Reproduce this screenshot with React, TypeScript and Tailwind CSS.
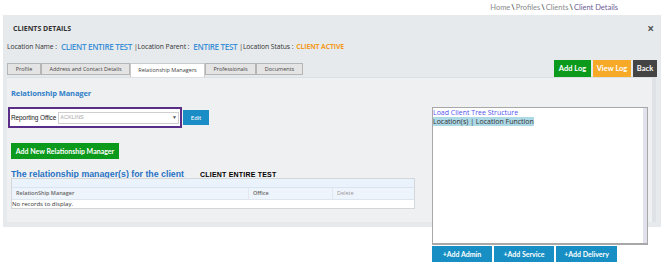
import React from 'react';

const tabs = [
  { label: 'Profile', w: 'w-[34px]' },
  { label: 'Address and Contact Details', w: 'w-[89px]' },
  { label: 'Relationship Managers', w: 'w-[75px]' },
  { label: 'Professionals', w: 'w-[51px]' },
  { label: 'Documents', w: 'w-[47px]' },
];

function Breadcrumb() {
  return (
    <div className="h-[15px] flex items-center justify-end pr-[52px] text-[7.5px] text-[#8a8a8a] font-['Lato',sans-serif]">
      <span>Home</span>
      <span className="text-[#555] font-bold mx-[1px]">\</span>
      <span>Profiles</span>
      <span className="text-[#555] font-bold mx-[1px]">\</span>
      <span>Clients</span>
      <span className="text-[#555] font-bold mx-[1px]">\</span>
      <span className="text-[#6d5a96]">Client Details</span>
    </div>
  );
}

function TabsRow() {
  return (
    <div className="flex items-end justify-between h-[17px] pl-[4px] pr-[4px]">
      <div className="flex items-end mb-[2px]">
        {tabs.map((t) => {
          const active = t.label === 'Relationship Managers';
          return (
            <div
              key={t.label}
              className={
                active
                  ? `${t.w} h-[14px] flex items-center justify-center bg-white border border-[#c9c9c9] border-b-0 text-[5.5px] text-[#444] -mb-[2px] pb-[1px]`
                  : `${t.w} h-[12px] flex items-center justify-center bg-[#e4e4e4] border border-[#b5b5b5] text-[5.5px] text-[#444]`
              }
            >
              {t.label}
            </div>
          );
        })}
      </div>
      <div className="flex gap-[2px] font-['Lato',sans-serif] font-bold text-[7.5px] text-white">
        <div className="h-[17px] w-[37px] flex items-center justify-center bg-[#0c9a1c]">Add Log</div>
        <div className="h-[17px] w-[38px] flex items-center justify-center bg-[#f7a928]">View Log</div>
        <div className="h-[17px] w-[24px] flex items-center justify-center bg-[#444444]">Back</div>
      </div>
    </div>
  );
}

function RightTree() {
  return (
    <div className="w-[216px] shrink-0 self-start ml-[17px] mt-[29px] flex flex-col">
      <div className="h-[138px] shrink-0 bg-white border border-[#a8a8a8] border-b-2 flex">
        <div className="flex-1 flex flex-col items-start text-[7px] font-['Open_Sans',sans-serif] leading-[9px]">
          <span className="text-[#5252f0]">Load Client Tree Structure</span>
          <span className="bg-[#add8e6] text-[#333]">Location(s) | Location Function</span>
        </div>
        <div className="w-[4px] bg-[#e2e2ec]" />
      </div>
      <div className="flex gap-[2px] mt-[1px] font-['Lato',sans-serif] font-bold text-[7px] text-white">
        <div className="h-[16px] w-[60px] flex items-center justify-center bg-[#178fc4]">+Add Admin</div>
        <div className="h-[16px] w-[60px] flex items-center justify-center bg-[#178fc4]">+Add Service</div>
        <div className="h-[16px] w-[61px] flex items-center justify-center bg-[#178fc4]">+Add Delivery</div>
      </div>
    </div>
  );
}

function LeftColumn() {
  return (
    <div className="w-[404px] shrink-0 flex flex-col">
      <div className="h-[15px] mt-[8px] flex items-center text-[7.5px] font-bold text-[#2f7fc8] font-['Open_Sans',sans-serif] tracking-[-0.1px]">
        Relationship Manager
      </div>
      <div className="flex items-center mt-[6px] -ml-[3px]">
        <div className="w-[174px] h-[21px] border-2 border-[#5a2e86] flex items-center pl-[1px] pr-[1px] bg-white">
          <span className="text-[6.5px] text-[#222] font-['Liberation_Sans',sans-serif] mr-[2px] tracking-[-0.1px]">Reporting Office</span>
          <div className="flex-1 h-[12px] border border-[#cfcfcf] flex items-center justify-between px-[1px] bg-white">
            <span className="text-[5.5px] text-[#aaa] font-['Liberation_Sans',sans-serif]">ACKLINS</span>
            <span className="text-[5px] text-[#555]">▼</span>
          </div>
        </div>
        <div className="ml-[1px] w-[26px] h-[15px] bg-[#1a8cc6] text-white text-[6px] flex items-center justify-center font-['Lato',sans-serif]">
          Edit
        </div>
      </div>
      <div className="mt-[15px] w-[108px] h-[16px] bg-[#0c9a1c] text-white text-[7px] font-bold font-['Lato',sans-serif] flex items-center justify-center">
        Add New Relationship Manager
      </div>
      <div className="flex items-baseline mt-[9px] h-[12px]">
        <span className="text-[8.8px] font-bold text-[#2873c4] font-['Liberation_Sans',sans-serif]">
          The relationship manager(s) for the client
        </span>
        <span className="ml-[16px] text-[7px] font-black text-black font-['Liberation_Sans',sans-serif] tracking-[0.2px]">
          CLIENT ENTIRE TEST
        </span>
      </div>
      <div className="mt-[-2px] border border-[#d3d7dc] bg-white font-['Open_Sans',sans-serif] text-[5.5px] text-[#555]">
        <div className="h-[9px] bg-[#eaf2fb] border-b border-[#d9e4f0]" />
        <div className="h-[12px] bg-[#eef4fb] flex items-center border-b border-[#dde5ee]">
          <div className="w-[236px] pl-[4px] font-semibold text-[#666]">RelationShip Manager</div>
          <div className="w-[84px] pl-[4px] border-l border-[#e3e8ee] h-full flex items-center font-semibold text-[#666]">Office</div>
          <div className="flex-1 pl-[4px] border-l border-[#e3e8ee] h-full flex items-center text-[#999]">Delete</div>
        </div>
        <div className="h-[8px] flex items-center text-[#333] text-[6px]">No records to display.</div>
      </div>
    </div>
  );
}

export default function App() {
  return (
    <div className="w-[670px] h-[266px] bg-white overflow-hidden font-['Open_Sans',sans-serif]">
      <Breadcrumb />
      <div className="ml-[3px] w-[658px] h-[212px] bg-[#e7eaed] flex flex-col">
        <div className="flex items-center justify-between h-[27px] pt-[1px] pl-[10px] pr-[7px]">
          <span className="text-[7px] font-bold text-[#333]">CLIENTS DETAILS</span>
          <span className="text-[12px] font-bold text-[#555] leading-none">×</span>
        </div>
        <div className="h-[10px] flex items-center pl-[4px] text-[6.8px] text-[#333] whitespace-nowrap tracking-[-0.1px]">
          <span>Location Name :</span>
          <span className="ml-[4px] mr-[2px] text-[8px] font-semibold text-[#3b8fd6] tracking-[-0.3px]">CLIENT ENTIRE TEST</span>
          <span>|Location Parent :</span>
          <span className="ml-[4px] mr-[2px] text-[8px] font-semibold text-[#3b8fd6] tracking-[-0.3px]">ENTIRE TEST</span>
          <span>|Location Status :</span>
          <span className="ml-[3px] font-bold text-[#f39b1c]">CLIENT ACTIVE</span>
        </div>
        <div className="mt-[8px]">
          <TabsRow />
        </div>
        <div className="ml-[4px] w-[649px] h-[145px] bg-[#eff0f2] border-t border-[#dcdfe3] border-r-4 border-r-[#dfe2e6] flex pl-[4px]">
          <LeftColumn />
          <RightTree />
        </div>
      </div>
    </div>
  );
}
